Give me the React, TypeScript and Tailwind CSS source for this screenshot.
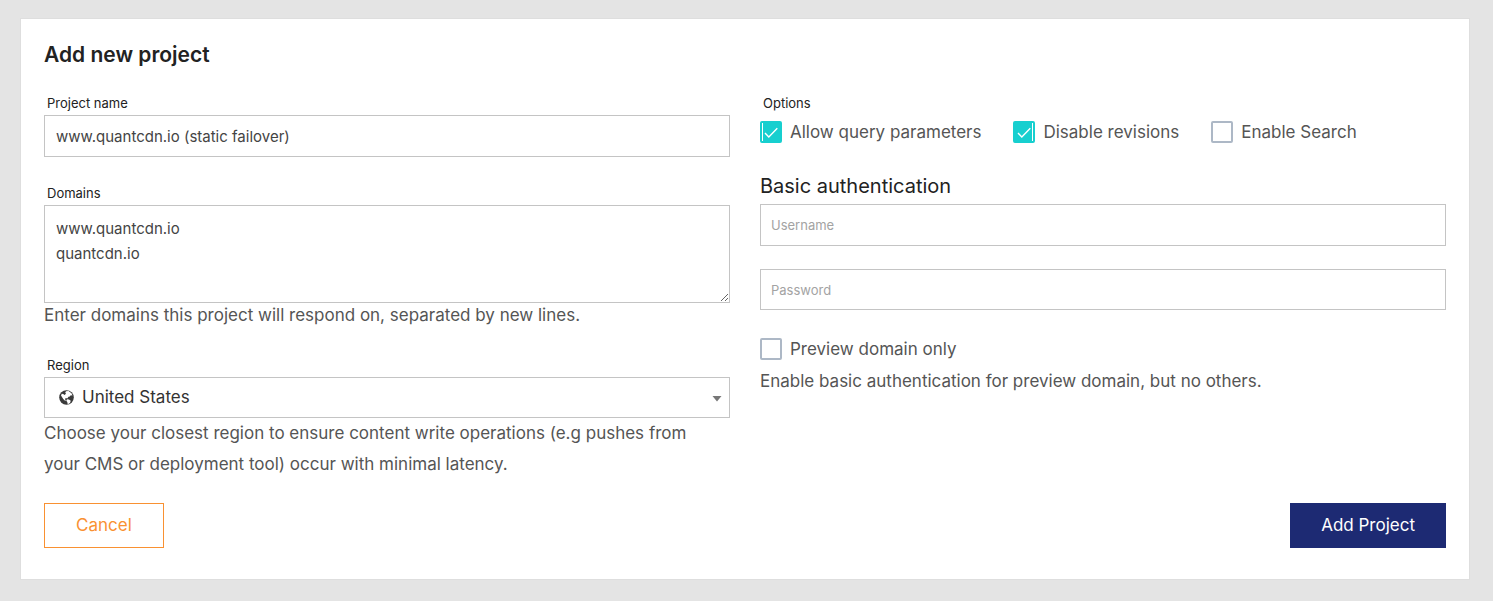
import { useState } from "react";
import type { ReactNode } from "react";

const fieldBox = "block w-full rounded-none border border-[#c4c4c4] bg-white outline-none";
const helpText = "text-[17px] text-[#555]";

function FieldLabel({ htmlFor, children }: { htmlFor: string; children: ReactNode }) {
  return (
    <label htmlFor={htmlFor} className="mb-0.5 block px-[3px] text-[13px] leading-5 text-[#222]">
      {children}
    </label>
  );
}

function GlobeIcon({ className }: { className: string }) {
  return (
    <svg viewBox="0 0 30 30" className={className} aria-hidden="true">
      <circle cx="15" cy="15" r="14.6" fill="#3a3a3a" />
      <path
        d="M14 2.5l5-.5 6 4.5 2 4.5-3.5-.5-2 2.5-2.5.5-2.5 3.5-3-1-1.5 2.5 2 2.5-2 .5-3.5-3.5L4 11l1.5-3.5 3 .5L11 10l3-2.5-1.5-2z"
        fill="#fff"
      />
      <path d="M16 18.5l4 .5 3.5 2.5-1.5 4.5-4.5 2.5-1-4.5-2-2.5z" fill="#fff" />
    </svg>
  );
}

type Seam = "left" | "right";

function CheckOption({ label, initial = false, seam }: { label: string; initial?: boolean; seam?: Seam }) {
  const [checked, setChecked] = useState(initial);
  return (
    <label className="flex items-center gap-2 text-[17px] leading-[22px] text-[#555]">
      <span className="relative size-[22px] shrink-0">
        <input
          type="checkbox"
          checked={checked}
          onChange={(e) => setChecked(e.target.checked)}
          className="block size-[22px] appearance-none rounded-[2px] border-2 border-[#adb8c6] bg-white checked:border-[#17cfcf] checked:bg-[#17cfcf]"
        />
        {checked && (
          <svg viewBox="0 0 22 22" className="pointer-events-none absolute inset-0 size-[22px]" fill="none" stroke="#fff">
            <path d="M5 12l3.8 4L17.3 7.3" strokeWidth="1.4" />
            {seam === "left" && <path d="M2.5 2v18" />}
            {seam === "right" && <path d="M19.5 2v18" />}
          </svg>
        )}
      </span>
      {label}
    </label>
  );
}

export default function App() {
  return (
    <main className="min-h-screen bg-[#e4e4e4] pt-[18px] pr-[23px] pb-[21px] pl-5 font-['Inter',sans-serif]">
      <form
        onSubmit={(e) => e.preventDefault()}
        className="border border-[#dedede] bg-white px-[23px] pt-5 pb-[31px]"
      >
        <h1 className="text-[21px] leading-8 font-semibold text-[#222]">Add new project</h1>

        <div className="mt-[22px] grid grid-cols-2 gap-[30px]">
          <div>
            <FieldLabel htmlFor="name">Project name</FieldLabel>
            <input
              id="name"
              type="text"
              defaultValue="www.quantcdn.io (static failover)"
              className={`${fieldBox} h-[42px] px-[11px] text-[15px] text-[#444]`}
            />

            <div className="mt-[26px]">
              <FieldLabel htmlFor="domains">Domains</FieldLabel>
              <textarea
                id="domains"
                defaultValue={"www.quantcdn.io\nquantcdn.io"}
                className={`${fieldBox} h-[98px] resize-y px-[11px] py-2.5 text-[15px] leading-[25px] text-[#444]`}
              />
              <p className={`${helpText} leading-6`}>
                Enter domains this project will respond on, separated by new lines.
              </p>
            </div>

            <div className="mt-7">
              <FieldLabel htmlFor="region">Region</FieldLabel>
              <div className="relative">
                <select
                  id="region"
                  defaultValue="us"
                  className={`${fieldBox} h-[41px] appearance-none pr-8 pl-[37px] text-[17px] text-[#333]`}
                >
                  <option value="us">United States</option>
                </select>
                <GlobeIcon className="pointer-events-none absolute top-[13px] left-[15px] size-[15px]" />
                <svg viewBox="0 0 10 6" className="pointer-events-none absolute top-[19px] right-2 h-[6px] w-[10px]">
                  <path d="M0.5 0h9L5 5.5z" fill="#777" />
                </svg>
              </div>
              <p className={`${helpText} pr-5 leading-[31px]`}>
                Choose your closest region to ensure content write operations (e.g pushes from your CMS or deployment tool) occur with minimal latency.
              </p>
            </div>
          </div>

          <div>
            <fieldset>
              <legend className="block px-[3px] text-[13px] leading-5 text-[#222]">Options</legend>
              <div className="mt-2 flex flex-wrap gap-8">
                <CheckOption label="Allow query parameters" initial seam="left" />
                <CheckOption label="Disable revisions" initial seam="right" />
                <CheckOption label="Enable Search" />
              </div>
            </fieldset>

            <h2 className="mt-[29px] text-[20px] leading-7 text-[#222]">Basic authentication</h2>
            <input
              type="text"
              aria-label="Username"
              placeholder="Username"
              className={`${fieldBox} mt-1 h-[42px] px-2.5 text-[13px] text-[#444] placeholder:text-[#a3a3a3]`}
            />
            <input
              type="password"
              aria-label="Password"
              placeholder="Password"
              className={`${fieldBox} mt-[23px] h-[41px] px-2.5 text-[13px] text-[#444] placeholder:text-[#a3a3a3]`}
            />
            <div className="mt-7">
              <CheckOption label="Preview domain only" />
              <p className={`${helpText} mt-1.5 leading-[31px]`}>
                Enable basic authentication for preview domain, but no others.
              </p>
            </div>
          </div>
        </div>

        <div className="mt-[23px] flex justify-between">
          <button type="button" className="h-[45px] border border-[#f99132] bg-white px-[31px] text-[17px] text-[#f99132]">
            Cancel
          </button>
          <button type="submit" className="h-[45px] bg-[#1d2a73] px-[31px] text-[17px] text-white">
            Add Project
          </button>
        </div>
      </form>
    </main>
  );
}
